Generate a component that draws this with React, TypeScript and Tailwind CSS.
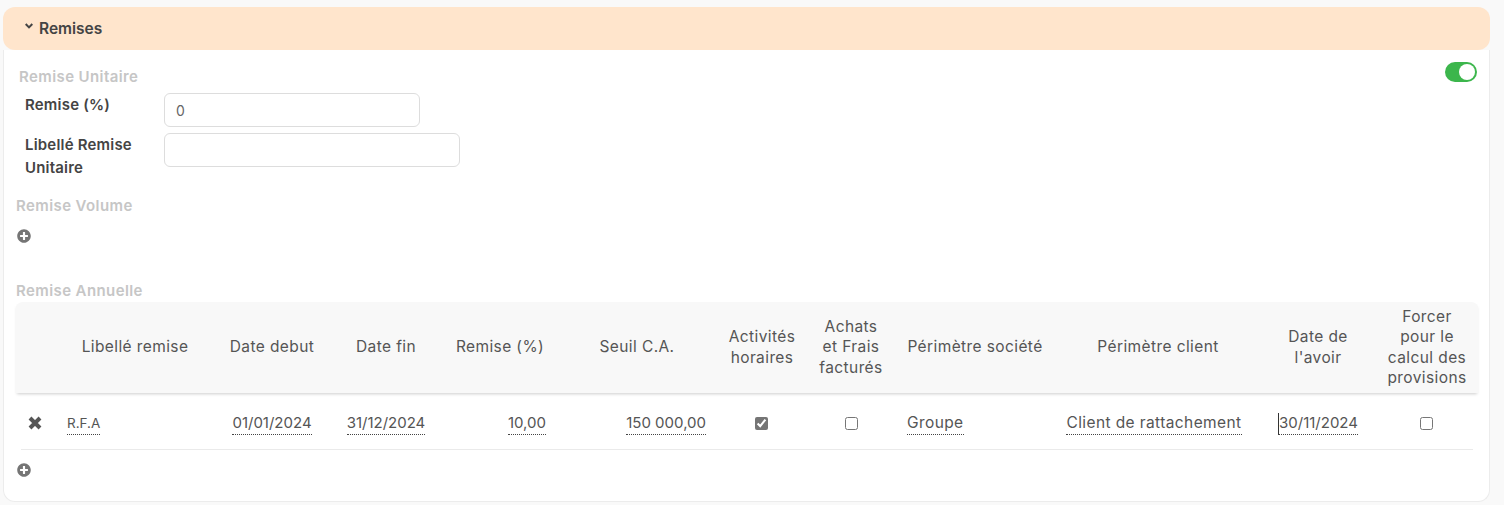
import { FaPlusCircle } from 'react-icons/fa'

const columns = [44, 152, 122, 106, 122, 152, 98, 80, 168, 198, 122, 100]

function Value({ children, caret, numeric }: { children: string; caret?: boolean; numeric?: boolean }) {
  return (
    <span
      className={`inline-block h-[22px] border-b border-dotted border-[#444] leading-[20px] ${numeric ? 'text-[15px] tracking-normal' : ''} ${caret ? 'border-l border-l-[#333] [border-left-style:solid]' : ''}`}
    >
      {children}
    </span>
  )
}

function SectionTitle({ children, className }: { children: string; className: string }) {
  return <div className={`h-5 text-[15px] font-semibold leading-5 tracking-[0.4px] text-[#c6c6c6] ${className}`}>{children}</div>
}

function AddButton({ className }: { className: string }) {
  return (
    <div className={className}>
      <FaPlusCircle className="h-[14px] w-[14px] text-[#757575]" />
    </div>
  )
}

export default function App() {
  return (
    <div className="h-[505px] overflow-hidden bg-[#f9f9f9] pt-[7px] pl-[3px] pr-[14px] font-['Inter','Liberation_Sans',sans-serif] text-[#555]">
      {/* Accordion header */}
      <div className="flex h-[43px] items-center rounded-xl bg-[#ffe5cc] pl-[22px]">
        <svg viewBox="0 0 8 6" className="mb-[5px] h-[6px] w-[8px]" fill="none" stroke="#444" strokeWidth="2">
          <path d="M0.7 1 L4 4.4 L7.3 1" />
        </svg>
        <span className="ml-[6px] text-[15.5px] font-semibold text-[#444]">Remises</span>
      </div>

      <div className="h-[452px] rounded-b-xl border-x border-b border-[#ececec] bg-white">
        <div className="flex items-start justify-between pt-[12px]">
          <SectionTitle className="mt-[5px] ml-[15px]">Remise Unitaire</SectionTitle>
          <div className="mr-[12px] flex h-5 w-8 items-center justify-end rounded-full bg-[#3cb64c] pr-[2px]">
            <div className="h-4 w-4 rounded-full bg-white" />
          </div>
        </div>

        {/* Remise unitaire form */}
        <div className="mt-[6px] flex pl-[21px] text-[15px] font-semibold leading-6 tracking-[0.2px] text-[#444]">
          <div className="w-[139px]">Remise (%)</div>
          <div className="flex h-[34px] w-[256px] items-center rounded-md border border-[#ddd] pt-[2px] pl-[11px] text-sm font-normal tracking-normal text-[#666]">0</div>
        </div>
        <div className="mt-[6px] flex pl-[21px] text-[15px] font-semibold leading-[23px] tracking-[0.2px] text-[#444]">
          <div className="w-[139px]">Libellé Remise<br />Unitaire</div>
          <div className="h-[34px] w-[296px] rounded-md border border-[#ddd]" />
        </div>

        <SectionTitle className="mt-[17px] ml-[12px]">Remise Volume</SectionTitle>
        <AddButton className="mt-[13px] ml-[13px] h-[14px]" />

        <SectionTitle className="mt-[38px] ml-[12px]">Remise Annuelle</SectionTitle>

        {/* Remise annuelle table */}
        <div className="mt-[1px] ml-[11px] w-[1464px]">
          <table className="w-full table-fixed border-separate border-spacing-0 text-[15.5px] leading-[20.5px] tracking-[0.4px]">
            <colgroup>
              {columns.map((w, i) => (
                <col key={i} style={{ width: w }} />
              ))}
            </colgroup>
            <thead>
              <tr className="h-[91px] text-center shadow-[0_3px_3px_-2px_rgba(0,0,0,0.2)] [&>th]:bg-[#f8f8f8] [&>th]:font-normal">
                <th className="rounded-tl-lg" />
                <th>Libellé remise</th>
                <th>Date debut</th>
                <th>Date fin</th>
                <th>Remise (%)</th>
                <th>Seuil C.A.</th>
                <th>Activités<br />horaires</th>
                <th>Achats<br />et Frais<br />facturés</th>
                <th>Périmètre société</th>
                <th>Périmètre client</th>
                <th>Date de<br />l'avoir</th>
                <th className="rounded-tr-lg pr-1">Forcer<br />pour le<br />calcul des<br />provisions</th>
              </tr>
            </thead>
            <tbody>
              <tr className="h-[56px]">
                <td className="pt-[4px] pl-[13px]">
                  <svg viewBox="0 0 14 14" className="h-[14px] w-[14px]" stroke="#555" strokeWidth="4">
                    <path d="M2 2 L12 12 M12 2 L2 12" />
                  </svg>
                </td>
                <td className="pt-[6px] pl-2 text-[13.5px] tracking-normal"><Value>R.F.A</Value></td>
                <td className="pt-[6px] text-center"><Value numeric>01/01/2024</Value></td>
                <td className="pt-[6px] text-center"><Value numeric>31/12/2024</Value></td>
                <td className="pt-[6px] pr-[15px] text-right"><Value numeric>10,00</Value></td>
                <td className="pt-[6px] pr-[7px] text-right"><Value numeric>150 000,00</Value></td>
                <td className="pt-[3px] pr-[1px] text-center"><input type="checkbox" checked readOnly className="align-middle accent-[#757575]" /></td>
                <td className="pt-[3px] text-center"><input type="checkbox" readOnly className="align-middle" /></td>
                <td className="pt-[6px] pl-4"><Value>Groupe</Value></td>
                <td className="pt-[6px] pr-2 text-center"><Value>Client de rattachement</Value></td>
                <td className="pt-[6px] text-center"><Value numeric caret>30/11/2024</Value></td>
                <td className="pt-[3px] pr-[6px] text-center"><input type="checkbox" readOnly className="align-middle" /></td>
              </tr>
            </tbody>
          </table>
          <div className="mr-[6px] ml-[6px] h-px bg-[#eaeaea]" />
        </div>

        <AddButton className="mt-[13px] ml-[13px] h-[14px]" />
      </div>
    </div>
  )
}
